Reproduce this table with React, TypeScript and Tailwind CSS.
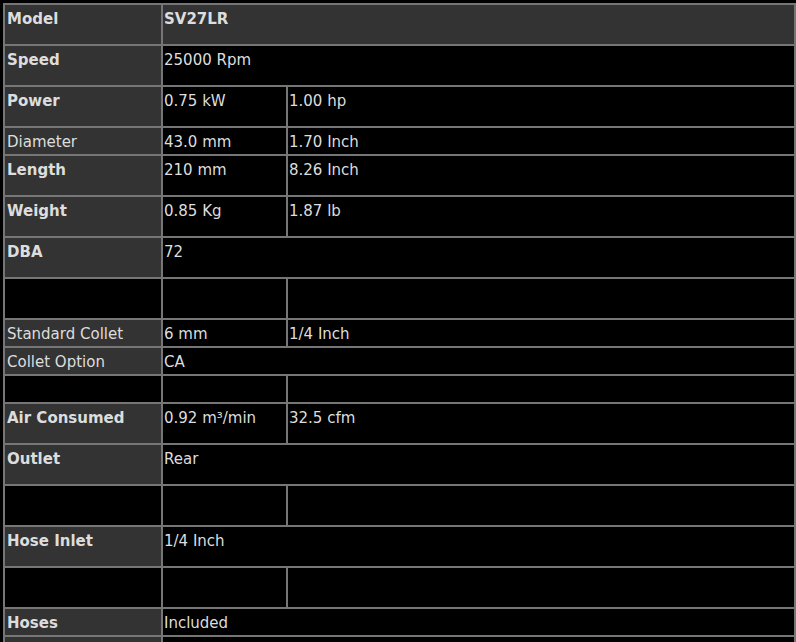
import React from 'react';

type Row = {
  label?: string;
  bold?: boolean;
  tall?: boolean;
  values: string[];
  head?: boolean;
  empty?: boolean;
};

// Данные спецификации
const rows: Row[] = [
  { label: 'Model', bold: true, tall: true, values: ['SV27LR'], head: true },
  { label: 'Speed', bold: true, tall: true, values: ['25000 Rpm'] },
  { label: 'Power', bold: true, tall: true, values: ['0.75 kW', '1.00 hp'] },
  { label: 'Diameter', values: ['43.0 mm', '1.70 Inch'] },
  { label: 'Length', bold: true, tall: true, values: ['210 mm', '8.26 Inch'] },
  { label: 'Weight', bold: true, tall: true, values: ['0.85 Kg', '1.87 lb'] },
  { label: 'DBA', bold: true, tall: true, values: ['72'] },
  { empty: true, tall: true, values: ['', ''] },
  { label: 'Standard Collet', values: ['6 mm', '1/4 Inch'] },
  { label: 'Collet Option', values: ['CA'] },
  { empty: true, values: ['', ''] },
  { label: 'Air Consumed', bold: true, tall: true, values: ['0.92 m³/min', '32.5 cfm'] },
  { label: 'Outlet', bold: true, tall: true, values: ['Rear'] },
  { empty: true, tall: true, values: ['', ''] },
  { label: 'Hose Inlet', bold: true, tall: true, values: ['1/4 Inch'] },
  { empty: true, tall: true, values: ['', ''] },
  { label: 'Hoses', bold: true, values: ['Included'] },
  { label: '', bold: true, tall: true, values: [''] },
];

export default function App() {
  return (
    <div className="w-[796px] h-[642px] overflow-hidden bg-black pt-[3px] pl-[3px] font-['DejaVu_Sans',sans-serif] text-[15px] leading-[18px] text-[#dddddd]">
      <table className="w-[793px] table-fixed border-separate border-spacing-[2px] bg-[#767676]">
        <colgroup>
          <col className="w-[156px]" />
          <col className="w-[123px]" />
          <col />
        </colgroup>
        <tbody>
          {rows.map((r, i) => {
            const h = r.tall ? 'h-[39px]' : 'h-[26px]';
            const labelBg = r.empty ? 'bg-black' : 'bg-[#333333]';
            const valBg = r.head ? 'bg-[#333333]' : 'bg-black';
            return (
              <tr key={i}>
                <td className={`${h} ${labelBg} align-top p-0 pt-[5px] pl-[2px] whitespace-nowrap ${r.bold ? 'font-bold' : ''}`}>
                  {r.label}
                </td>
                {r.values.length === 1 ? (
                  <td colSpan={2} className={`${h} ${valBg} align-top p-0 pt-[5px] pl-[1px] whitespace-nowrap ${r.head ? 'font-bold' : ''}`}>
                    {r.values[0]}
                  </td>
                ) : (
                  r.values.map((v, j) => (
                    <td key={j} className={`${h} ${valBg} align-top p-0 pt-[5px] pl-[1px] whitespace-nowrap`}>
                      {v}
                    </td>
                  ))
                )}
              </tr>
            );
          })}
        </tbody>
      </table>
    </div>
  );
}
